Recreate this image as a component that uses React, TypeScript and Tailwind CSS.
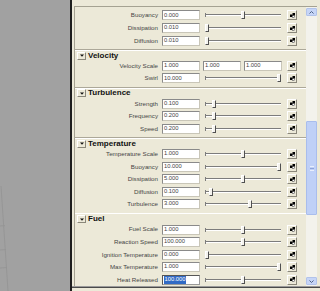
import React from 'react';

type Row = { label: string; value?: string; pos?: number; triple?: string[]; selected?: boolean };
type Section = { title?: string; rows: Row[] };

const sections: Section[] = [
  {
    rows: [
      { label: 'Buoyancy', value: '0.000', pos: 0.5 },
      { label: 'Dissipation', value: '0.010', pos: 0 },
      { label: 'Diffusion', value: '0.010', pos: 0 },
    ],
  },
  {
    title: 'Velocity',
    rows: [
      { label: 'Velocity Scale', triple: ['1.000', '1.000', '1.000'] },
      { label: 'Swirl', value: '10.000', pos: 1 },
    ],
  },
  {
    title: 'Turbulence',
    rows: [
      { label: 'Strength', value: '0.100', pos: 0.1 },
      { label: 'Frequency', value: '0.200', pos: 0.1 },
      { label: 'Speed', value: '0.200', pos: 0.1 },
    ],
  },
  {
    title: 'Temperature',
    rows: [
      { label: 'Temperature Scale', value: '1.000', pos: 0.5 },
      { label: 'Buoyancy', value: '10.000', pos: 1 },
      { label: 'Dissipation', value: '5.000', pos: 0.5 },
      { label: 'Diffusion', value: '0.100', pos: 0.055 },
      { label: 'Turbulence', value: '3.000', pos: 0.6 },
    ],
  },
  {
    title: 'Fuel',
    rows: [
      { label: 'Fuel Scale', value: '1.000', pos: 0.5 },
      { label: 'Reaction Speed', value: '100.000', pos: 0.5 },
      { label: 'Ignition Temperature', value: '0.000', pos: 0 },
      { label: 'Max Temperature', value: '1.000', pos: 1 },
      { label: 'Heat Released', value: '100.000', pos: 0.5, selected: true },
    ],
  },
];

function Field({ value, selected, className = '' }: { value: string; selected?: boolean; className?: string }) {
  return (
    <div
      className={`w-[38px] h-[10px] shrink-0 bg-white border flex items-center pl-[1px] text-[5.8px] leading-none text-[#444] ${
        selected
          ? 'border-[#555] border-b-[#9a9a9a] border-r-[#9a9a9a]'
          : 'border-t-[#8a8a8a] border-l-[#8a8a8a] border-b-[#c9c6b8] border-r-[#c9c6b8]'
      } ${className}`}
    >
      {selected ? <span className="bg-[#316ac5] text-white px-[0.5px] py-[1px]">{value}</span> : value}
    </div>
  );
}

function Slider({ pos }: { pos: number }) {
  return (
    <div className="relative w-[76px] h-[10px] ml-[5px] shrink-0">
      <div className="absolute left-0 right-0 top-[4px] h-[2px] border-t border-t-[#7c7c7c] border-b border-b-white" />
      <div className="absolute left-0 top-[3px] w-[1px] h-[4px] bg-[#7c7c7c]" />
      <div
        className="absolute top-[1px] w-[4px] h-[8px] bg-[#f4f3ee] border border-t-white border-l-white border-r-[#505050] border-b-[#505050]"
        style={{ left: `${pos * 72}px` }}
      />
    </div>
  );
}

function MapButton({ className = '' }: { className?: string }) {
  return (
    <div
      className={`w-[10px] h-[10px] shrink-0 flex items-center justify-center bg-[#ece9d8] border border-t-white border-l-white border-r-[#8a877a] border-b-[#8a877a] ${className}`}
    >
      <svg width="5" height="5" viewBox="0 0 5 5">
        <rect x="2.5" y="0" width="2.5" height="2.5" fill="#000" />
        <rect x="0" y="1.5" width="2.5" height="2.5" fill="#000" />
        <rect x="2.2" y="2.7" width="2.4" height="2" fill="#fff" stroke="#222" strokeWidth="0.5" />
      </svg>
    </div>
  );
}

function CollapseButton() {
  return (
    <div className="ml-[2px] w-[9px] h-[8px] flex items-center justify-center bg-[#ece9d8] border border-t-white border-l-white border-r-[#8a877a] border-b-[#8a877a]">
      <svg width="4" height="3" viewBox="0 0 4 3">
        <path d="M0 0.5 L4 0.5 L2 2.7 Z" fill="#111" />
      </svg>
    </div>
  );
}

function AttrRow({ row }: { row: Row }) {
  return (
    <div className="h-[12.6px] flex items-center">
      <div className="w-[83px] shrink-0 text-right text-[6.2px] leading-none text-[#454545] whitespace-nowrap">
        {row.label}
      </div>
      {row.triple ? (
        <>
          <Field value={row.triple[0]} className="ml-[4px]" />
          <Field value={row.triple[1]} className="ml-[3px]" />
          <Field value={row.triple[2]} className="ml-[3px]" />
          <MapButton className="ml-[5px]" />
        </>
      ) : (
        <>
          <Field value={row.value ?? ''} selected={row.selected} className="ml-[4px]" />
          <Slider pos={row.pos ?? 0} />
          <MapButton className="ml-[6px]" />
        </>
      )}
    </div>
  );
}

function Header({ title }: { title: string }) {
  return (
    <div className="h-[12.6px] flex flex-col">
      <div className="mt-[2px] h-[1px] bg-[#aca899]" />
      <div className="h-[1px] bg-white" />
      <div className="flex-1 flex items-center pt-[1px]">
        <CollapseButton />
        <span className="ml-[2px] text-[8px] font-bold leading-none text-[#111]">{title}</span>
      </div>
    </div>
  );
}

function Chevron({ up }: { up?: boolean }) {
  return (
    <svg width="5" height="3" viewBox="0 0 5 3">
      <path d={up ? 'M0.5 2.5 L2.5 0.5 L4.5 2.5' : 'M0.5 0.5 L2.5 2.5 L4.5 0.5'} fill="none" stroke="#4d6185" strokeWidth="1" />
    </svg>
  );
}

function ScrollBar() {
  return (
    <div className="w-[11px] shrink-0 flex flex-col bg-[#f3f2ec] pt-[1px] pb-[1px]">
      <div className="h-[8px] flex items-center justify-center bg-[#c6d5f7] border border-[#b2c3ea] rounded-[1px]">
        <Chevron up />
      </div>
      <div className="h-[105px]" />
      <div className="h-[94px] flex flex-col items-center justify-center gap-[1px] bg-[#bfd0f7] border border-[#a9bdec] rounded-[1px]">
        <div className="w-[4px] h-[1px] bg-[#e8eefc]" />
        <div className="w-[4px] h-[1px] bg-[#8fa5d9]" />
        <div className="w-[4px] h-[1px] bg-[#e8eefc]" />
      </div>
      <div className="flex-1" />
      <div className="h-[8px] flex items-center justify-center bg-[#c6d5f7] border border-[#b2c3ea] rounded-[1px]">
        <Chevron />
      </div>
    </div>
  );
}

export default function App() {
  return (
    <div className="w-[320px] h-[291px] flex overflow-hidden bg-[#ece9d8] font-['Liberation_Sans',Arial,sans-serif]">
      <div className="w-[70px] h-full shrink-0 bg-[#a1a1a1]">
        <svg width="70" height="291" viewBox="0 0 70 291" className="block">
          <path d="M1 186 L8 291" stroke="#939393" strokeWidth="0.8" fill="none" />
          <path d="M0 226 L5 225.5 M0 250 L6 249.5 M0 268 L7 267.5" stroke="#949494" strokeWidth="0.8" fill="none" />
        </svg>
      </div>
      <div className="w-[2px] h-full shrink-0 bg-[#1e1e1e]" />
      <div className="flex-1 flex flex-col min-w-0">
        <div className="h-[6px] shrink-0" />
        <div className="flex-1 min-h-0 flex ml-[2px] mr-[3px] border-l border-t border-[#a5a292]">
          <div className="flex-1 min-w-0 overflow-hidden pt-[2.2px]">
            {sections.map((s, i) => (
              <div key={i}>
                {s.title && <Header title={s.title} />}
                {s.rows.map((r, j) => (
                  <AttrRow key={j} row={r} />
                ))}
              </div>
            ))}
          </div>
          <ScrollBar />
        </div>
        <div className="h-[1px] shrink-0 bg-[#9a9a9a]" />
        <div className="h-[1px] shrink-0 bg-[#4a4a4a]" />
        <div className="h-[3px] shrink-0" />
      </div>
    </div>
  );
}
